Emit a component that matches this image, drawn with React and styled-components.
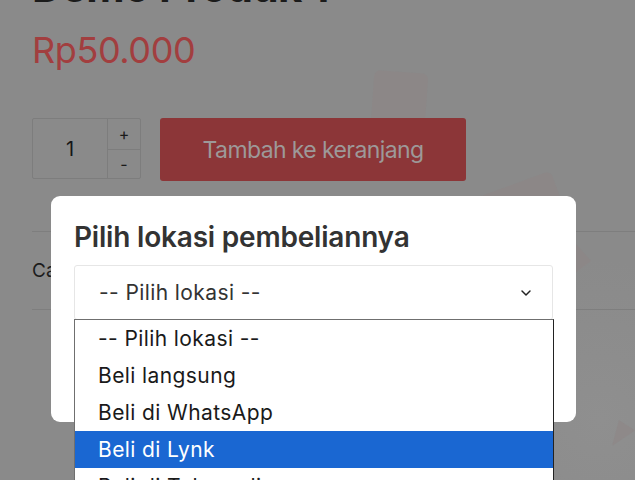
import { ChevronDown } from "lucide-react";
import styled, { createGlobalStyle } from "styled-components";

const GlobalStyle = createGlobalStyle`
  * { box-sizing: border-box; }
  html, body {
    margin: 0;
    padding: 0;
    background: #8a8a8a;
    font-family: Inter, "Noto Sans", sans-serif;
    overflow: hidden;
  }
`;

const Page = styled.div`
  position: relative;
  width: 635px;
  height: 480px;
  overflow: hidden;
  background: radial-gradient(circle at 600px 420px, #8f8f8f 0, #8a8a8a 160px);
`;

const Decor = styled.div`
  position: absolute;
  background: #8d8585;
  border-radius: ${(p) => p.$radius || "6px"};
  opacity: 0.6;
`;

const Product = styled.div`
  position: relative;
  padding: 0 0 0 32px;
`;

const Title = styled.h1`
  margin: -37px 0 0;
  font-size: 42px;
  line-height: 48px;
  font-weight: 700;
  color: #1b1b1b;
  letter-spacing: -0.5px;
`;

const Price = styled.div`
  margin-top: 19px;
  font-size: 36px;
  line-height: 40px;
  color: #a23e3f;
  letter-spacing: -0.4px;
`;

const BuyRow = styled.div`
  display: flex;
  gap: 19px;
  margin-top: 48px;
`;

const Qty = styled.div`
  display: flex;
  width: 109px;
  height: 61px;
  border: 1px solid #7d7d7d;
  border-radius: 2px;
`;

const QtyValue = styled.div`
  width: 75px;
  display: flex;
  align-items: center;
  justify-content: center;
  font-size: 20px;
  color: #161616;
  border-right: 1px solid #7d7d7d;
`;

const QtyButtons = styled.div`
  flex: 1;
  display: grid;
  grid-template-rows: 1fr 1fr;
`;

const QtyButton = styled.div`
  display: flex;
  align-items: center;
  justify-content: center;
  font-size: 16px;
  color: #1a1a1a;
  border-top: ${(p) => (p.$bottom ? "1px solid #7d7d7d" : "none")};
`;

const AddButton = styled.div`
  width: 306px;
  height: 63px;
  background: #8c3638;
  border-radius: 3px;
  display: flex;
  align-items: center;
  justify-content: center;
  font-size: 23px;
  letter-spacing: -0.6px;
  color: #9d9999;
`;

const Section = styled.div`
  margin-top: 50px;
  border-top: 1px solid #7e7e7e;
  border-bottom: 1px solid #7e7e7e;
  height: 79px;
  display: flex;
  align-items: center;
  font-size: 19px;
  color: #1c1c1c;
`;

const Modal = styled.div`
  position: absolute;
  left: 51px;
  top: 196px;
  width: 525px;
  height: 226px;
  background: #fff;
  border-radius: 9px;
  padding: 23px 23px 0;
`;

const ModalTitle = styled.h2`
  margin: 0;
  font-size: 28px;
  line-height: 36px;
  font-weight: 600;
  color: #333;
  letter-spacing: -0.2px;
`;

const SelectWrap = styled.div`
  position: relative;
  margin-top: 10px;
`;

const SelectBox = styled.div`
  height: 55px;
  border: 1px solid #e6e6e6;
  border-radius: 3px;
  display: flex;
  align-items: center;
  justify-content: space-between;
  padding: 0 18px 0 24px;
  font-size: 21px;
  letter-spacing: 0.4px;
  color: #333;
`;

const List = styled.div`
  position: absolute;
  top: 54px;
  left: 0;
  width: 480px;
  background: #fff;
  border: 1px solid #6f6f6f;
  border-right-color: #222;
`;

const Option = styled.div`
  height: 37px;
  display: flex;
  align-items: center;
  padding-left: 23px;
  font-size: 21px;
  letter-spacing: 0.4px;
  color: ${(p) => (p.$active ? "#fff" : "#1a1a1a")};
  background: ${(p) => (p.$active ? "#1a67d2" : "#fff")};
`;

const options = [
  "-- Pilih lokasi --",
  "Beli langsung",
  "Beli di WhatsApp",
  "Beli di Lynk",
  "Beli di Tokopedia",
];

export default function App() {
  return (
    <>
      <GlobalStyle />
      <Page>
        <Decor style={{ left: 372, top: 72, width: 54, height: 70, transform: "rotate(4deg)" }} />
        <Decor style={{ left: 470, top: 185, width: 90, height: 40, transform: "rotate(-20deg)" }} />
        <Decor $radius="2px" style={{ left: 575, top: 243, width: 16, height: 30, clipPath: "polygon(0 0, 100% 60%, 0 100%)" }} />
        <Decor $radius="2px" style={{ left: 612, top: 420, width: 23, height: 26, clipPath: "polygon(30% 0, 100% 40%, 0 100%)" }} />
        <Product>
          <Title>Demo Produk 1</Title>
          <Price>Rp50.000</Price>
          <BuyRow>
            <Qty>
              <QtyValue>1</QtyValue>
              <QtyButtons>
                <QtyButton>+</QtyButton>
                <QtyButton $bottom>-</QtyButton>
              </QtyButtons>
            </Qty>
            <AddButton>Tambah ke keranjang</AddButton>
          </BuyRow>
          <Section>Cara pembelian</Section>
        </Product>
        <Modal>
          <ModalTitle>Pilih lokasi pembeliannya</ModalTitle>
          <SelectWrap>
            <SelectBox>
              <span>-- Pilih lokasi --</span>
              <ChevronDown size={16} strokeWidth={2.2} color="#222" />
            </SelectBox>
            <List>
              {options.map((o, i) => (
                <Option key={o} $active={i === 3}>
                  {o}
                </Option>
              ))}
            </List>
          </SelectWrap>
        </Modal>
      </Page>
    </>
  );
}
